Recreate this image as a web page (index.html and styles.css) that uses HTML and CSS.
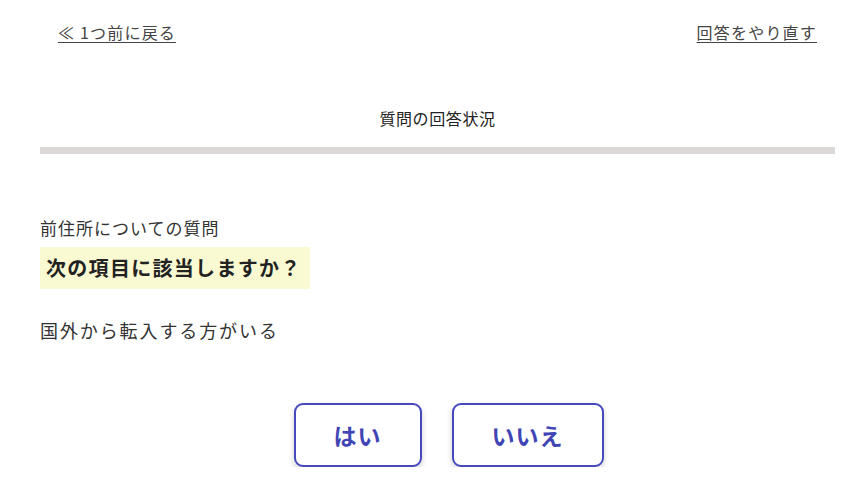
FILE: index.html
```html
<!DOCTYPE html>
<html lang="ja">
<head>
<meta charset="utf-8">
<title>質問の回答状況</title>
<link rel="stylesheet" href="styles.css">
</head>
<body>
<div class="page">
  <nav class="topnav">
    <a href="#" class="navlink">≪ 1つ前に戻る</a>
    <a href="#" class="navlink">回答をやり直す</a>
  </nav>
  <section class="status">
    <h2 class="status-title">質問の回答状況</h2>
    <div class="progress"><div class="progress-fill" style="width:0%"></div></div>
  </section>
  <section class="question">
    <p class="q-category">前住所についての質問</p>
    <h1 class="q-title">次の項目に該当しますか？</h1>
    <p class="q-body">国外から転入する方がいる</p>
  </section>
  <div class="answers">
    <button class="answer answer-yes">はい</button>
    <button class="answer answer-no">いいえ</button>
  </div>
</div>
</body>
</html>
```
FILE: styles.css
```css
html, body {
  margin: 0;
  padding: 0;
  background: #ffffff;
}
body {
  font-family: "Noto Sans CJK JP", "Noto Sans", sans-serif;
  color: #333333;
}
.page {
  padding: 0 26px 0 40px;
}
.topnav {
  display: flex;
  justify-content: space-between;
  padding: 22px 18px 0 18px;
}
.navlink {
  color: #444444;
  font-size: 16px;
  line-height: 20px;
  letter-spacing: 1.2px;
  text-decoration: underline;
  text-underline-offset: 3px;
}
.status {
  margin-top: 64px;
}
.status-title {
  margin: 0;
  text-align: center;
  font-size: 16px;
  font-weight: normal;
  line-height: 24px;
  color: #222222;
  letter-spacing: 0.6px;
}
.progress {
  margin-top: 17px;
  height: 7px;
  background: #dcd8d8;
}
.progress-fill {
  height: 100%;
  background: #4046b8;
}
.question {
  margin-top: 62px;
}
.q-category {
  margin: 0;
  font-size: 17px;
  line-height: 24px;
  letter-spacing: 1px;
  color: #333333;
}
.q-title {
  display: inline-block;
  margin: 7px 0 0 0;
  padding: 0 8px 0 6px;
  background: #fafad2;
  font-size: 20px;
  font-weight: bold;
  line-height: 42px;
  letter-spacing: 1.3px;
  color: #222222;
}
.q-body {
  margin: 27px 0 0 0;
  font-size: 18px;
  line-height: 28px;
  letter-spacing: 1.9px;
  color: #333333;
}
.answers {
  display: flex;
  justify-content: center;
  gap: 30px;
  margin-top: 59px;
  padding-left: 22px;
}
.answer {
  height: 64px;
  background: #ffffff;
  border: 2px solid #4549bd;
  border-radius: 9px;
  box-shadow: 0 3px 6px rgba(0, 0, 0, 0.18);
  font-family: "Noto Sans CJK JP", "Noto Sans", sans-serif;
  font-size: 23px;
  font-weight: bold;
  letter-spacing: 1px;
  color: #3f45b4;
  cursor: pointer;
}
.answer-yes {
  width: 128px;
}
.answer-no {
  width: 152px;
}
```
